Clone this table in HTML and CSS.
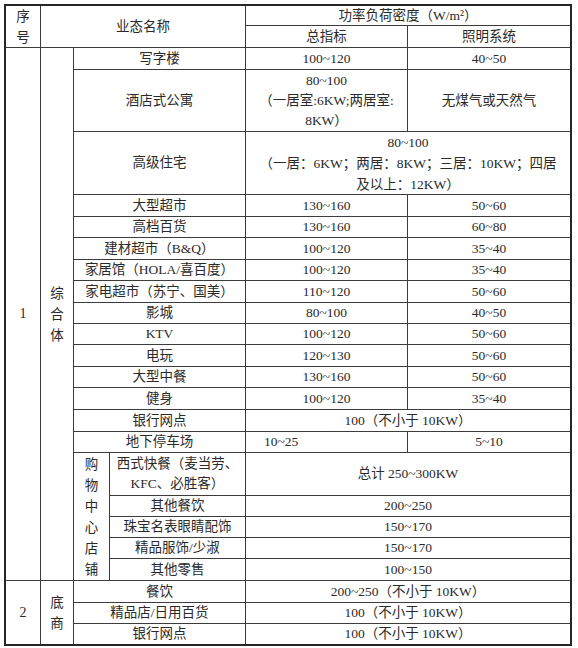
FILE: index.html
```html
<!DOCTYPE html>
<html lang="zh-CN">
<head>
<meta charset="utf-8">
<title>功率负荷密度</title>
<link rel="stylesheet" href="styles.css">
</head>
<body>
<div class="sheet">
  <div class="c r2 v">序<br>号</div>
  <div class="c s3 r2">业态名称</div>
  <div class="c s2">功率负荷密度（W/m²）</div>
  <div class="c">总指标</div>
  <div class="c">照明系统</div>

  <div class="c r20 num">1</div>
  <div class="c r20 v">综<br>合<br>体</div>
  <div class="c s2">写字楼</div>
  <div class="c">100~120</div>
  <div class="c">40~50</div>

  <div class="c s2">酒店式公寓</div>
  <div class="c multi">80~100<br>（一居室:6KW;两居室:<br>8KW）</div>
  <div class="c">无煤气或天然气</div>

  <div class="c s2">高级住宅</div>
  <div class="c s2 multi tall">80~100<br>（一居：6KW；两居：8KW；三居：10KW；四居<br>及以上：12KW）</div>

  <div class="c s2">大型超市</div>
  <div class="c">130~160</div>
  <div class="c">50~60</div>

  <div class="c s2">高档百货</div>
  <div class="c">130~160</div>
  <div class="c">60~80</div>

  <div class="c s2">建材超市（B&amp;Q）</div>
  <div class="c">100~120</div>
  <div class="c">35~40</div>

  <div class="c s2">家居馆（HOLA/喜百度）</div>
  <div class="c">100~120</div>
  <div class="c">35~40</div>

  <div class="c s2">家电超市（苏宁、国美）</div>
  <div class="c">110~120</div>
  <div class="c">50~60</div>

  <div class="c s2">影城</div>
  <div class="c">80~100</div>
  <div class="c">40~50</div>

  <div class="c s2">KTV</div>
  <div class="c">100~120</div>
  <div class="c">50~60</div>

  <div class="c s2">电玩</div>
  <div class="c">120~130</div>
  <div class="c">50~60</div>

  <div class="c s2">大型中餐</div>
  <div class="c">130~160</div>
  <div class="c">50~60</div>

  <div class="c s2">健身</div>
  <div class="c">100~120</div>
  <div class="c">35~40</div>

  <div class="c s2">银行网点</div>
  <div class="c s2">100（不小于 10KW）</div>

  <div class="c s2">地下停车场</div>
  <div class="c left">10~25</div>
  <div class="c">5~10</div>

  <div class="c r5 v">购<br>物<br>中<br>心<br>店<br>铺</div>
  <div class="c multi">西式快餐（麦当劳、<br>KFC、必胜客）</div>
  <div class="c s2">总计 250~300KW</div>

  <div class="c">其他餐饮</div>
  <div class="c s2">200~250</div>

  <div class="c">珠宝名表眼睛配饰</div>
  <div class="c s2">150~170</div>

  <div class="c">精品服饰/少淑</div>
  <div class="c s2">150~170</div>

  <div class="c">其他零售</div>
  <div class="c s2">100~150</div>

  <div class="c r3 num">2</div>
  <div class="c r3 v">底<br>商</div>
  <div class="c s2">餐饮</div>
  <div class="c s2">200~250（不小于 10KW）</div>

  <div class="c s2">精品店/日用百货</div>
  <div class="c s2">100（不小于 10KW）</div>

  <div class="c s2">银行网点</div>
  <div class="c s2">100（不小于 10KW）</div>
</div>
</body>
</html>
```

FILE: styles.css
```css
html, body {
  margin: 0;
  padding: 0;
  background: #ffffff;
}

body {
  font-family: "Liberation Serif", "Noto Sans CJK SC", serif;
  font-size: 13.5px;
  font-weight: 400;
  color: #2a2a2a;
}

.sheet {
  margin: 4px 0 0 4px;
  display: inline-grid;
  grid-template-columns: 34px 32px 35px 135px 161px 162px;
  grid-template-rows:
    19px 21px
    21px 61px 62px 21px 20px 21px 20px 21px 20px 20px 21px 20px 21px 21px 20px
    42px 20px 20px 20px 21px
    21px 20px 20px;
  gap: 1px;
  background: #3c3c3c;
  border: 2px solid #262626;
}

.c {
  background: #ffffff;
  display: flex;
  align-items: center;
  justify-content: center;
  text-align: center;
  white-space: nowrap;
  line-height: 20px;
  overflow: hidden;
}

.multi {
  line-height: 20px;
}

.tall {
  line-height: 21px;
}

.v {
  line-height: 21px;
}

.num {
  font-size: 14px;
}

.left {
  justify-content: flex-start;
  padding-left: 18px;
}

.s2 { grid-column: span 2; }
.s3 { grid-column: span 3; }
.r2 { grid-row: span 2; }
.r3 { grid-row: span 3; }
.r5 { grid-row: span 5; }
.r20 { grid-row: span 20; }
```
